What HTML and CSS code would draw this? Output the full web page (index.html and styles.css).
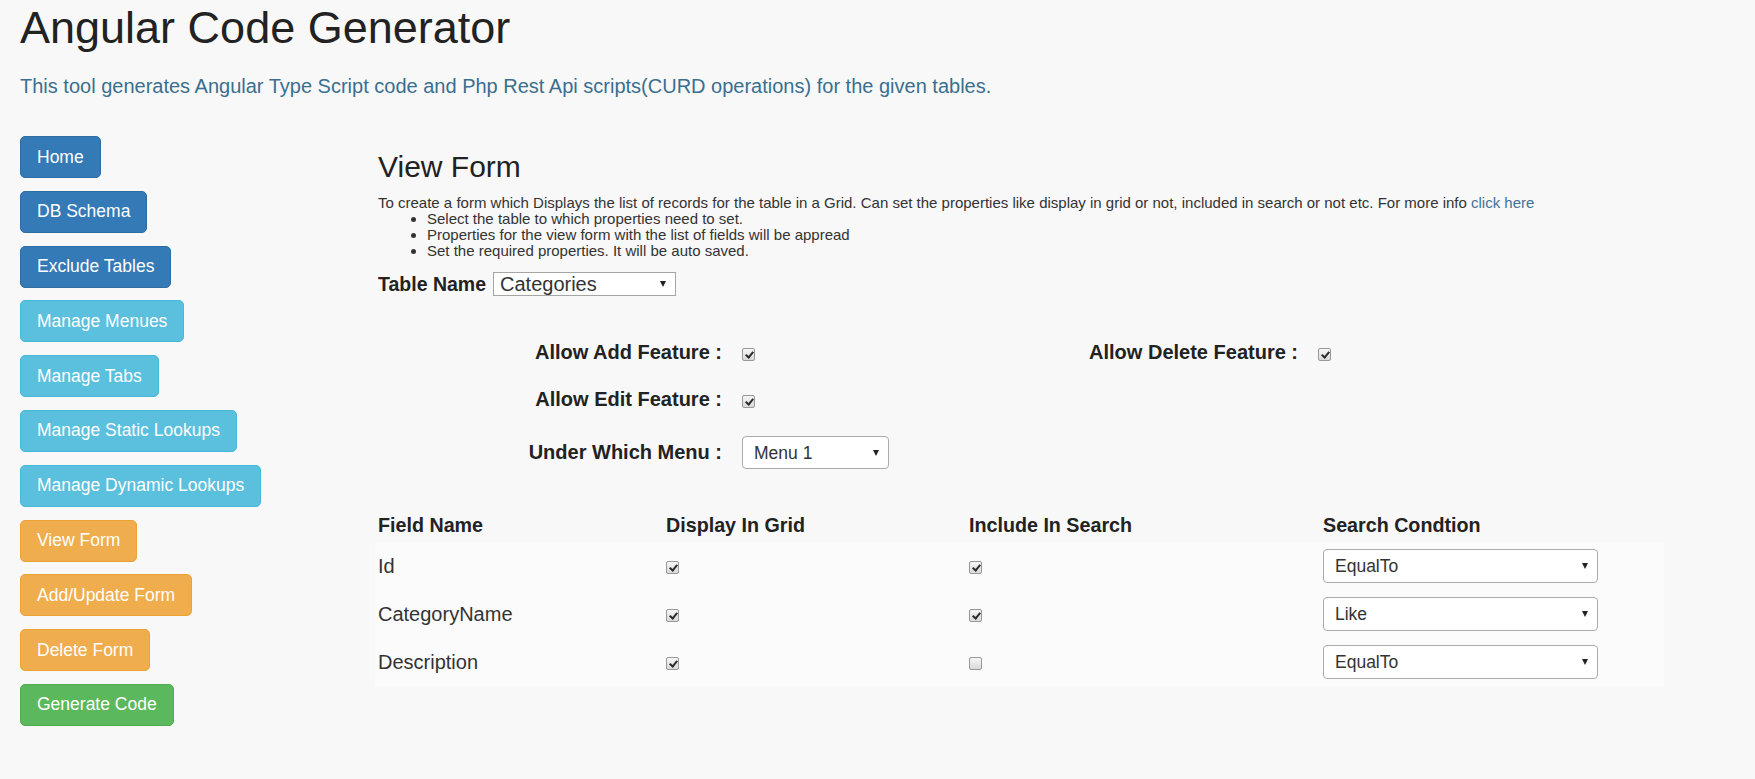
FILE: index.html
```html
<!DOCTYPE html>
<html>
<head>
<meta charset="utf-8">
<title>Angular Code Generator</title>
<link rel="stylesheet" href="styles.css">
</head>
<body>
<div class="page">
  <h1 class="title">Angular Code Generator</h1>
  <p class="lead">This tool generates Angular Type Script code and Php Rest Api scripts(CURD operations) for the given tables.</p>
  <div class="layout">
    <nav class="sidebar">
      <a class="btn btn-primary" href="#">Home</a>
      <a class="btn btn-primary" href="#">DB Schema</a>
      <a class="btn btn-primary" href="#">Exclude Tables</a>
      <a class="btn btn-info" href="#">Manage Menues</a>
      <a class="btn btn-info" href="#">Manage Tabs</a>
      <a class="btn btn-info" href="#">Manage Static Lookups</a>
      <a class="btn btn-info" href="#">Manage Dynamic Lookups</a>
      <a class="btn btn-warning" href="#">View Form</a>
      <a class="btn btn-warning" href="#">Add/Update Form</a>
      <a class="btn btn-warning" href="#">Delete Form</a>
      <a class="btn btn-success" href="#">Generate Code</a>
    </nav>
    <main class="main">
      <h2 class="heading">View Form</h2>
      <p class="desc">To create a form which Displays the list of records for the table in a Grid. Can set the properties like display in grid or not, included in search or not etc. For more info <a class="link" href="#">click here</a></p>
      <ul class="steps">
        <li>Select the table to which properties need to set.</li>
        <li>Properties for the view form with the list of fields will be appread</li>
        <li>Set the required properties. It will be auto saved.</li>
      </ul>
      <div class="table-name">
        <label class="tn-label">Table Name</label>
        <span class="sel"><select class="tn-select"><option>Categories</option></select></span>
      </div>

      <div class="feat-row first">
        <div class="feat"><label class="feat-label">Allow Add Feature :</label><input class="cb feat-cb" type="checkbox" checked></div>
        <div class="feat"><label class="feat-label">Allow Delete Feature :</label><input class="cb feat-cb" type="checkbox" checked></div>
      </div>
      <div class="feat-row second">
        <div class="feat"><label class="feat-label">Allow Edit Feature :</label><input class="cb feat-cb" type="checkbox" checked></div>
      </div>
      <div class="feat-row third">
        <div class="feat"><label class="feat-label">Under Which Menu :</label><span class="sel feat-sel"><select class="menu-select"><option>Menu 1</option></select></span></div>
      </div>

      <table class="fields">
        <colgroup>
          <col class="c1"><col class="c2"><col class="c3"><col class="c4">
        </colgroup>
        <thead>
          <tr>
            <th>Field Name</th>
            <th>Display In Grid</th>
            <th>Include In Search</th>
            <th>Search Condtion</th>
          </tr>
        </thead>
        <tbody>
          <tr>
            <td>Id</td>
            <td><input class="cb" type="checkbox" checked></td>
            <td><input class="cb" type="checkbox" checked></td>
            <td><span class="sel"><select class="cond-select"><option>EqualTo</option></select></span></td>
          </tr>
          <tr>
            <td>CategoryName</td>
            <td><input class="cb" type="checkbox" checked></td>
            <td><input class="cb" type="checkbox" checked></td>
            <td><span class="sel"><select class="cond-select"><option>Like</option></select></span></td>
          </tr>
          <tr>
            <td>Description</td>
            <td><input class="cb" type="checkbox" checked></td>
            <td><input class="cb" type="checkbox"></td>
            <td><span class="sel"><select class="cond-select"><option>EqualTo</option></select></span></td>
          </tr>
        </tbody>
      </table>
    </main>
  </div>
</div>
</body>
</html>
```

FILE: styles.css
```css
* { box-sizing: border-box; }
html, body { margin: 0; padding: 0; }
body {
  background: #f8f8f8;
  font-family: "Liberation Sans", Arial, sans-serif;
  color: #333;
  width: 1755px;
  height: 779px;
  overflow: hidden;
}
.page { padding: 3px 20px 0 20px; }
.title {
  font-size: 45px;
  font-weight: normal;
  line-height: 49.5px;
  margin: 0;
  color: #222;
}
.lead {
  font-size: 20px;
  line-height: 30px;
  margin: 18px 0 0 0;
  color: #3a6f8f;
}
.layout { display: flex; margin-top: 35.5px; }
.sidebar {
  width: 358px;
  flex: none;
  display: flex;
  flex-direction: column;
  align-items: flex-start;
  gap: 12.8px;
}
.btn {
  display: inline-block;
  font-size: 17.5px;
  line-height: 25px;
  padding: 7.5px 16px;
  border: 1px solid transparent;
  border-radius: 5px;
  color: #fff;
  text-decoration: none;
  white-space: nowrap;
}
.btn-primary { background: #337ab7; border-color: #2e6da4; }
.btn-info { background: #5bc0de; border-color: #46b8da; }
.btn-warning { background: #f0ad4e; border-color: #eea236; }
.btn-success { background: #5cb85c; border-color: #4cae4c; }

.main { flex: 1; }
.heading {
  font-size: 30px;
  font-weight: normal;
  line-height: 33px;
  margin: 14px 0 12px 0;
  color: #222;
}
.desc { font-size: 15px; line-height: 16px; margin: 0; }
.link { color: #3f7299; text-decoration: none; }
.steps {
  font-size: 15px;
  line-height: 16px;
  margin: 0;
  padding-left: 49px;
}

.table-name {
  display: flex;
  align-items: center;
  height: 24px;
  margin-top: 13px;
}
.tn-label {
  font-size: 19.5px;
  font-weight: bold;
  color: #222;
  margin-right: 7px;
}

.sel { position: relative; display: inline-block; }
.sel::after {
  content: "";
  position: absolute;
  right: 10px;
  top: 50%;
  margin-top: -3px;
  border-left: 3.5px solid transparent;
  border-right: 3.5px solid transparent;
  border-top: 6px solid #222;
  pointer-events: none;
}
select {
  -webkit-appearance: none;
  appearance: none;
  display: block;
  background: #fff;
  color: #333;
  font-family: "Liberation Sans", Arial, sans-serif;
  margin: 0;
  outline: none;
}
.tn-select {
  width: 183px;
  height: 24px;
  font-size: 20px;
  padding: 0 6px;
  border: 1px solid #a6a6a6;
  border-radius: 0;
}
.menu-select {
  width: 147px;
  height: 33px;
  font-size: 17.5px;
  padding: 0 11px;
  border: 1px solid #aaa;
  border-radius: 4px;
}
.cond-select {
  width: 275px;
  height: 34px;
  font-size: 17.5px;
  padding: 0 11px;
  border: 1px solid #aaa;
  border-radius: 4px;
}

.cb {
  -webkit-appearance: none;
  appearance: none;
  position: relative;
  display: inline-block;
  width: 13px;
  height: 13px;
  margin: 0;
  vertical-align: middle;
  border: 1px solid #999;
  border-radius: 2px;
  background: linear-gradient(#f6f6f6, #d9d9d9);
}
.cb:checked::after {
  content: "";
  position: absolute;
  left: 3.5px;
  top: 1px;
  width: 3px;
  height: 6px;
  border: solid #2a2a2a;
  border-width: 0 2px 2px 0;
  transform: rotate(40deg);
}

.feat-row {
  display: grid;
  grid-template-columns: 576px 576px;
  align-items: center;
  height: 34px;
}
.feat-row.first { margin-top: 39px; }
.feat-row.second { margin-top: 13px; }
.feat-row.third { margin-top: 20px; height: 33px; }
.feat { display: flex; align-items: center; }
.feat-label {
  width: 344px;
  flex: none;
  text-align: right;
  font-size: 20px;
  font-weight: bold;
  color: #222;
  white-space: nowrap;
}
.feat .feat-cb { margin-left: 20px; margin-top: 5px; }
.feat .feat-sel { margin-left: 20px; }

.fields {
  margin-top: 39px;
  margin-left: -3px;
  width: 1289px;
  table-layout: fixed;
  border-collapse: collapse;
}
.c1 { width: 288px; }
.c2 { width: 303px; }
.c3 { width: 354px; }
.c4 { width: 344px; }
.fields th {
  height: 34px;
  padding: 0 3px;
  text-align: left;
  vertical-align: middle;
  font-size: 19.7px;
  font-weight: bold;
  color: #222;
}
.fields td {
  height: 48px;
  padding: 0 3px;
  vertical-align: middle;
  font-size: 20px;
  color: #333;
}
.fields td .cb { margin-top: 1px; }
.fields tbody tr { background: #fbfbfb; }
```
